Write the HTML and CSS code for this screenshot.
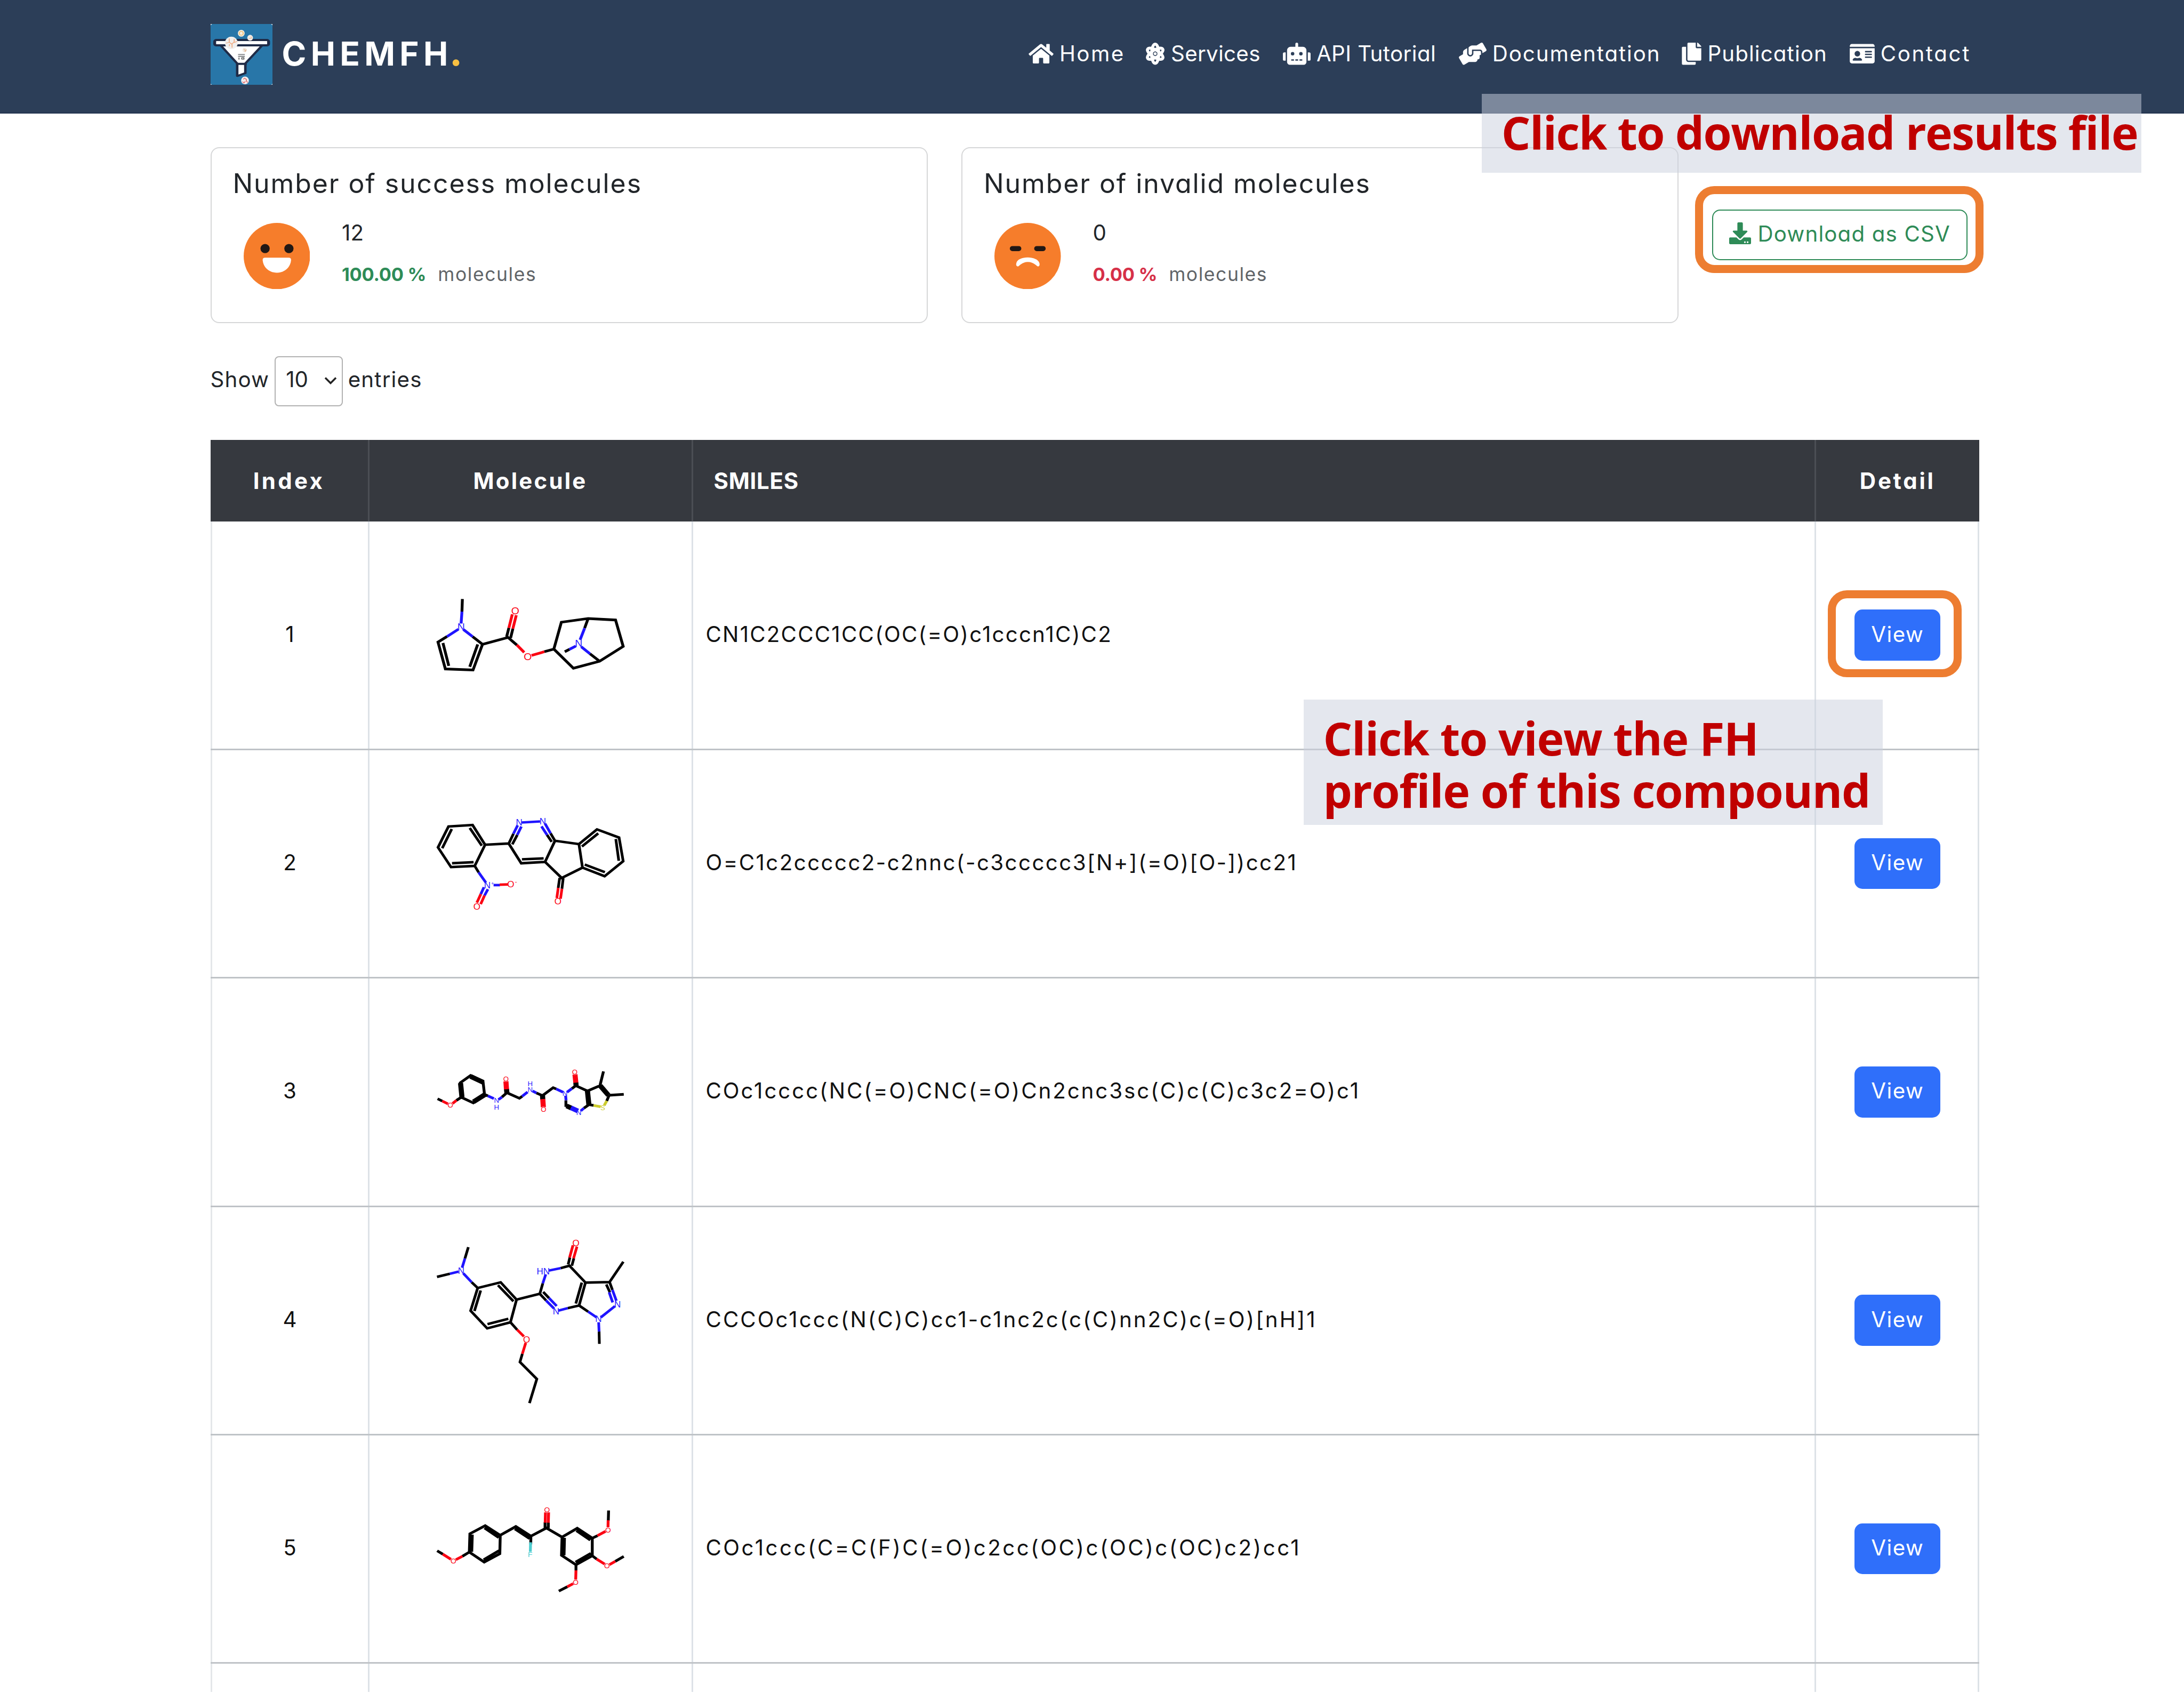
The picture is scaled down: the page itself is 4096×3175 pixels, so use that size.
FILE: index.html
```html
<!DOCTYPE html>
<html lang="en">
<head>
<meta charset="utf-8">
<title>ChemFH</title>
<link rel="stylesheet" href="styles.css">
</head>
<body>
<header class="header">
  <div class="brand">
    <svg class="logo" viewBox="66 95 349 461" preserveAspectRatio="none">
      <rect x="66" y="95" width="349" height="461" fill="#2876a8"/>
      <path d="M66 95h8l-8 10zM415 95h-8l8 10zM66 556h8l-8-10zM415 556h-8l8-10z" fill="#e8eef4"/>
      <path d="M122 255L216 393V488L262 466V393L358 255Z" fill="#fff" stroke="#1f2b47" stroke-width="14" stroke-linejoin="round"/>
      <path d="M210 396H270" stroke="#1f2b47" stroke-width="16"/>
      <rect x="89" y="216" width="304" height="40" rx="10" fill="#fff" stroke="#1f2b47" stroke-width="16"/>
      <ellipse cx="183" cy="238" rx="36" ry="47" fill="#f0efee"/>
      <path d="M171 205v28l14 14 14-16v-22M152 240l18-6M199 236l16-10M172 248v14M187 248v26" fill="none" stroke="#efaa80" stroke-width="5"/>
      <ellipse cx="239" cy="165" rx="19" ry="26" fill="#f5efe4"/>
      <ellipse cx="239" cy="165" rx="11" ry="15" fill="none" stroke="#f0c176" stroke-width="6"/>
      <ellipse cx="289" cy="199" rx="16" ry="22" fill="#f3ece6"/>
      <path d="M281 204h14v-14" fill="none" stroke="#e9b48d" stroke-width="4"/>
      <ellipse cx="258" cy="292" rx="12" ry="16" fill="#f3e9e0"/>
      <path d="M252 284l8 6v14l8-16" fill="none" stroke="#e6b994" stroke-width="4"/>
      <path d="M221 325h38M221 339h38" stroke="#55575c" stroke-width="6"/>
      <path d="M242 349h12v12h-12zM226 348v16" fill="none" stroke="#333" stroke-width="4"/>
      <ellipse cx="260" cy="521" rx="22" ry="29" fill="#f4eeee"/>
      <path d="M250 512l8-8 10 10v12l8 12M246 530l8 10 8-12" fill="none" stroke="#e06767" stroke-width="5"/>
    </svg>
    <span class="brand-name">CHEMFH<span class="dot">.</span></span>
  </div>
  <nav class="nav">
    <a class="home"><svg style="width:47px" viewBox="0 0 576 512"><path d="M280.37 148.26L96 300.11V464a16 16 0 0 0 16 16l112.06-.29a16 16 0 0 0 15.92-16V368a16 16 0 0 1 16-16h64a16 16 0 0 1 16 16v95.64a16 16 0 0 0 16 16.05L464 480a16 16 0 0 0 16-16V300L295.67 148.26a12.19 12.19 0 0 0-15.3 0zM571.6 251.47L488 182.56V44.05a12 12 0 0 0-12-12h-56a12 12 0 0 0-12 12v72.61L318.47 43a48 48 0 0 0-61 0L4.34 251.47a12 12 0 0 0-1.6 16.9l25.5 31A12 12 0 0 0 45.15 301l235.22-193.74a12.19 12.19 0 0 1 15.3 0L530.9 301a12 12 0 0 0 16.9-1.6l25.5-31a12 12 0 0 0-1.7-16.93z"/></svg>Home</a>
    <a class="services"><svg style="width:37px" viewBox="0 0 448 512"><g fill="none" stroke="#fff" stroke-width="68"><ellipse cx="224" cy="256" rx="84" ry="222"/><ellipse cx="224" cy="256" rx="84" ry="205" transform="rotate(58 224 256)"/><ellipse cx="224" cy="256" rx="84" ry="205" transform="rotate(-58 224 256)"/></g><circle cx="224" cy="256" r="34"/></svg>Services</a>
    <a class="api"><svg style="width:52px" viewBox="0 0 640 512"><path d="M32,224H64V416H32A31.96166,31.96166,0,0,1,0,384V256A31.96166,31.96166,0,0,1,32,224Zm512-48V448a64.06328,64.06328,0,0,1-64,64H160a64.06328,64.06328,0,0,1-64-64V176a79.974,79.974,0,0,1,80-80H288V32a32,32,0,0,1,64,0V96H464A79.974,79.974,0,0,1,544,176ZM264,256a40,40,0,1,0-40,40A39.997,39.997,0,0,0,264,256Zm-8,128H192v32h64Zm96,0H288v32h64ZM456,256a40,40,0,1,0-40,40A39.997,39.997,0,0,0,456,256Zm-8,128H384v32h64ZM640,256V384a31.96166,31.96166,0,0,1-32,32H576V224h32A31.96166,31.96166,0,0,1,640,256Z"/></svg>API Tutorial</a>
    <a class="docs"><svg style="width:52px" viewBox="0 0 640 512"><path d="M488 192H336v56c0 39.7-32.3 72-72 72s-72-32.3-72-72V126.4l-64.9 39C107.8 176.9 96 197.8 96 220.2v47.3l-80 46.2C.7 322.5-4.6 342.1 4.3 357.4l80 138.6c8.8 15.3 28.4 20.5 43.7 11.7L231.4 448H368c35.3 0 64-28.7 64-64h16c17.7 0 32-14.3 32-32v-64h8c13.3 0 24-10.7 24-24v-48c0-13.3-10.7-24-24-24zm147.7-37.4L555.7 16C546.9.7 527.3-4.5 512 4.3L408.6 64H306.4c-12 0-23.7 3.4-33.9 9.7L239 94.6c-9.4 5.8-15 16.1-15 27.1V248c0 22.1 17.9 40 40 40s40-17.9 40-40v-88h184c30.9 0 56 25.1 56 56v28.5l80-46.2c15.3-8.9 20.5-28.4 11.7-43.7z"/></svg>Documentation</a>
    <a class="pub"><svg style="width:37px" viewBox="0 0 448 512"><path d="M320 448v40c0 13.255-10.745 24-24 24H24c-13.255 0-24-10.745-24-24V120c0-13.255 10.745-24 24-24h72v296c0 30.879 25.121 56 56 56h168zm0-344V0H152c-13.255 0-24 10.745-24 24v368c0 13.255 10.745 24 24 24h272c13.255 0 24-10.745 24-24V128H344c-13.2 0-24-10.8-24-24zm120.971-31.029L375.029 7.029A24 24 0 0 0 358.059 0H352v96h96v-6.059a24 24 0 0 0-7.029-16.97z"/></svg>Publication</a>
    <a class="contact"><svg style="width:47px" viewBox="0 0 576 512"><path d="M528 32H48C21.5 32 0 53.5 0 80v16h576V80c0-26.5-21.5-48-48-48zM0 432c0 26.5 21.5 48 48 48h480c26.5 0 48-21.5 48-48V128H0v304zm352-232c0-4.4 3.6-8 8-8h144c4.4 0 8 3.6 8 8v16c0 4.4-3.6 8-8 8H360c-4.4 0-8-3.6-8-8v-16zm0 64c0-4.4 3.6-8 8-8h144c4.4 0 8 3.6 8 8v16c0 4.4-3.6 8-8 8H360c-4.4 0-8-3.6-8-8v-16zm0 64c0-4.4 3.6-8 8-8h144c4.4 0 8 3.6 8 8v16c0 4.4-3.6 8-8 8H360c-4.4 0-8-3.6-8-8v-16zM176 192c35.3 0 64 28.7 64 64s-28.7 64-64 64-64-28.7-64-64 28.7-64 64-64zM67.1 396.2C75.5 370.5 99.6 352 128 352h8.2c12.3 5.1 25.7 8 39.8 8s27.6-2.9 39.8-8h8.2c28.4 0 52.5 18.5 60.9 44.2 3.2 9.9-5.2 19.8-15.6 19.8H82.7c-10.4 0-18.8-10-15.6-19.8z"/></svg>Contact</a>
  </nav>
</header>

<main class="main">
  <section class="summary">
    <div class="card">
      <h5>Number of success molecules</h5>
      <div class="card-body">
        <svg class="face" viewBox="0 0 124 124"><circle cx="62" cy="62" r="62" fill="#f67d2b"/><circle cx="40" cy="48" r="8.6" fill="#211815"/><circle cx="84.5" cy="48" r="8.6" fill="#211815"/><path d="M40 65H84Q89 65 88.500 70C87 84 76 93 62 93S37 84 35.500 70Q35 65 40 65Z" fill="#fff"/></svg>
        <div class="figures">
          <div class="count">12</div>
          <div class="rate"><b class="ok">100.00 %</b><span class="unit">molecules</span></div>
        </div>
      </div>
    </div>
    <div class="card">
      <h5>Number of invalid molecules</h5>
      <div class="card-body">
        <svg class="face" viewBox="0 0 124 124"><circle cx="62" cy="62" r="62" fill="#f67d2b"/><path d="M33.500 48H45.500M79 48H91" stroke="#211815" stroke-width="9.5" stroke-linecap="round"/><path d="M44 81.500C41 81 40 79 41 75C44 61 80 61 84 75C85 79 84 81 81.500 81.500C79 81 73 73 62.500 73S46 81 44 81.500Z" fill="#fff"/></svg>
        <div class="figures">
          <div class="count">0</div>
          <div class="rate"><b class="bad">0.00 %</b><span class="unit">molecules</span></div>
        </div>
      </div>
    </div>
    <a class="download"><svg viewBox="0 0 512 512"><path d="M216 0h80c13.300 0 24 10.700 24 24v168h87.700c17.800 0 26.700 21.500 14.100 34.100L269.700 378.300c-7.500 7.500-19.800 7.500-27.300 0L90.100 226.100c-12.600-12.600-3.700-34.100 14.100-34.100H192V24c0-13.300 10.700-24 24-24zm296 376v112c0 13.300-10.700 24-24 24H24c-13.300 0-24-10.700-24-24V376c0-13.300 10.700-24 24-24h146.700l49 49c20.100 20.100 52.500 20.100 72.600 0l49-49H488c13.300 0 24 10.700 24 24zm-124 88c0-11-9-20-20-20s-20 9-20 20 9 20 20 20 20-9 20-20zm64 0c0-11-9-20-20-20s-20 9-20 20 9 20 20 20 20-9 20-20z"/></svg><span>Download as CSV</span></a>
  </section>

  <div class="length">
    <span>Show</span>
    <span class="select"><span>10</span><svg viewBox="0 0 24 14"><path d="M2 1.500L12 11.500L22 1.500" fill="none" stroke="#222" stroke-width="3.5"/></svg></span>
    <span>entries</span>
  </div>

  <div class="table">
    <div class="row head"><div class="c th-index">Index</div><div class="c th-molecule">Molecule</div><div class="th-smiles">SMILES</div><div class="c th-detail">Detail</div></div>

    <div class="row"><div class="c">1</div><div class="c pic">
      <svg class="mol m1" style="height:223.4px" viewBox="-11.5 1 1568 900" preserveAspectRatio="none">
        <path class="k" d="M290 180L287 275M182 463L118 505L170 708L365 716L432 522L362 464M153 512L194 685M398 523L342 692M432 522L612 470L674 527M602 465L618 398M630 474L646 404M868 578L935 558L988 355L1177 327L1370 338L1424 538L1258 650L1073 703L935 558M1177 327L1152 400M1258 650L1190 594M1012 578L1045 560"/>
        <path class="b" d="M287 275L281 365M262 408L182 463M297 410L362 464M1152 400L1120 488M1090 535L1045 560M1128 540L1190 594"/>
        <path class="r" d="M618 398L642 295M646 404L670 302M674 527L726 583M778 606L868 578"/>
        <g font-size="73"><text class="tb" x="281" y="418">N</text><text class="tr" x="663" y="297">O</text><text class="tr" x="751" y="640">O</text><text class="tb" x="1110" y="541">N</text></g>
      </svg></div><div class="smi s1">CN1C2CCC1CC(OC(=O)c1cccn1C)C2</div><div class="c pic"><a class="view">View</a></div></div>

    <div class="row"><div class="c">2</div><div class="c pic">
      <svg class="mol m2" style="height:223.4px" viewBox="-11.5 17 1568 900" preserveAspectRatio="none">
        <path class="k" d="M450 324L362 175L192 186L118 344L210 493L377 484L450 324L617 315M427 331L342 197M215 205L148 350M217 464L369 456M617 315L650 241M642 321L677 250M617 315L705 464L873 454L943 294L912 238M710 434L863 427M920 302L887 250M943 294L1112 319L1137 497L990 575L873 454M1112 319L1239 208L1395 270L1424 448L1293 562L1137 497M1133 337L1248 238M1372 281L1393 445M1153 474L1295 531M377 484L405 533M976 575L966 650M1001 577L992 657"/>
        <path class="b" d="M650 241L680 177M677 250L706 186M708 156L838 148M912 238L873 165M887 250L848 185M405 533L456 610M442 645L420 697M470 660L446 708M510 629H555"/>
        <path class="r" d="M553 626L612 624M420 697L392 762M446 708L419 773M966 650L956 726M992 657L982 732"/>
        <g font-size="64"><text class="tb" x="690" y="178">N</text><text class="tb" x="857" y="169">N</text><text class="tb" x="466" y="652">N</text><text class="tb" font-size="36" x="503" y="628">+</text><text class="tr" x="631" y="645">O</text><text class="tr" font-size="44" x="668" y="618">-</text><text class="tr" x="392" y="813">O</text><text class="tr" x="964" y="775">O</text></g>
      </svg></div><div class="smi s2">O=C1c2ccccc2-c2nnc(-c3ccccc3[N+](=O)[O-])cc21</div><div class="c pic"><a class="view">View</a></div></div>

    <div class="row"><div class="c">3</div><div class="c pic">
      <svg class="mol m3" style="height:134px" viewBox="-11.5 3 1568 540" preserveAspectRatio="none">
        <path class="k" d="M115 324L148 341M248 336L282 312L275 203L348 148L435 190L446 290L367 355L282 312M446 290L470 302M569 311L604 278L692 320L712 305M812 280L855 300L930 240L952 250M1062 247L1090 225L1172 265L1260 225L1285 117M1325 297L1428 290M1172 265L1183 368L1147 395M1183 368L1215 374M1325 297L1308 340M1020 335V385"/>
        <path class="k w" d="M277 205L287 312M348 155L437 200M452 290L368 347M604 280L601 250M855 297L857 328M1092 225L1090 200M1172 265L1182 368M1262 225L1320 297M1025 378L1060 395"/>
        <path class="b" d="M470 302L512 322M545 330L569 311M712 305L750 272M785 265L812 280M952 250L1000 274M1028 274L1062 247M1018 300L1021 335M1125 415L1147 395"/>
        <path class="b w" d="M1055 392L1105 416"/>
        <path class="r" d="M148 341L192 364M220 360L248 336"/>
        <path class="r w" d="M601 252L597 192M857 326L861 388M1090 202L1084 140"/>
        <path class="y" d="M1215 374L1265 384M1290 374L1308 340"/>
        <g font-size="50"><text class="tr h" x="205" y="391">O</text><text class="tr h" x="597" y="192">O</text><text class="tr h" x="862" y="422">O</text><text class="tr h" x="1082" y="140">O</text><text class="tb" x="531" y="353">N</text><text class="tb" x="531" y="405">H</text><text class="tb" x="768" y="272">N</text><text class="tb" x="768" y="228">H</text><text class="tb" x="1013" y="302">N</text><text class="tb" x="1111" y="446">N</text><text class="ty" x="1280" y="409">S</text></g>
      </svg></div><div class="smi s3">COc1cccc(NC(=O)CNC(=O)Cn2cnc3sc(C)c(C)c3c2=O)c1</div><div class="c pic"><a class="view">View</a></div></div>

    <div class="row"><div class="c">4</div><div class="c pic">
      <svg class="mol m4" style="height:342.6px" viewBox="-11.5 -12 1568 1380" preserveAspectRatio="none">
        <path class="k" d="M332 124L308 210M111 349L202 325M355 389L398 433L560 390L672 521L629 692L465 738L348 605L398 433M419 452L375 607M541 412L650 533M467 706L614 666M629 692L676 748M672 521L836 477L857 398M836 477L880 527M860 463L901 509M983 283L1045 265L1158 392L1113 565L1033 585M1132 392L1090 550M1036 255L1048 203M1062 265L1076 209M1158 392L1328 388L1348 447M1305 406L1330 465M1328 388L1425 235M1113 565L1177 612M1254 762L1256 855M713 930L696 992L815 1120L763 1303"/>
        <path class="b" d="M308 210L288 280M202 325L263 309M297 323L355 389M857 398L878 330M900 301L983 283M880 527L936 588M901 509L955 569M966 604L1033 585M1177 612L1237 655M1348 447L1376 530M1325 465L1350 542M1366 570L1266 655M1251 692L1254 762"/>
        <path class="r" d="M1046 203L1070 110M1074 209L1098 120M676 748L724 799M737 847L713 930"/>
        <g font-size="64"><text class="tb" x="281" y="326">N</text><text class="tb" x="860" y="331">HN</text><text class="tb" x="951" y="631">N</text><text class="tb" x="1384" y="579">N</text><text class="tb" x="1250" y="688">N</text><text class="tr" x="1091" y="116">O</text><text class="tr" x="743" y="846">O</text></g>
      </svg></div><div class="smi s4">CCCOc1ccc(N(C)C)cc1-c1nc2c(c(C)nn2C)c(=O)[nH]1</div><div class="c pic"><a class="view">View</a></div></div>

    <div class="row"><div class="c">5</div><div class="c pic">
      <svg class="mol m5" style="height:208.5px" viewBox="-11.5 4 1568 840" preserveAspectRatio="none">
        <path class="k" d="M112 440L152 466M290 482L339 450L343 312L451 250L557 323L554 462L444 526L339 450M360 318L356 448M446 268L546 340M548 440L440 508M557 323L667 257L773 330L883 268L993 337L989 474L1091 546L1206 478L1206 345L1100 270L993 337M660 275L764 348M773 330L772 392M873 268V225M896 268V225M1010 342L1007 474M1094 288L1192 360M1196 460L1088 526M1206 345L1243 326M1321 136L1319 212M1206 478L1237 503M1368 520L1428 483M1091 546V588M970 745L1030 712"/>
        <path class="f" d="M771 376L769 448"/>
        <path class="r" d="M152 466L210 505M243 508L290 482M874 228L876 150M896 228L898 150M1243 326L1300 293M1318 210L1317 262M1237 503L1295 542M1325 546L1368 520M1091 588L1089 658M1030 712L1075 686"/>
        <g font-size="52"><text class="tr h" x="227" y="537">O</text><text class="tr h" x="887" y="150">O</text><text class="tr h" x="1317" y="302">O</text><text class="tr h" x="1310" y="571">O</text><text class="tr h" x="1089" y="697">O</text><text class="tf" x="768" y="487">F</text></g>
      </svg></div><div class="smi s5">COc1ccc(C=C(F)C(=O)c2cc(OC)c(OC)c(OC)c2)cc1</div><div class="c pic"><a class="view">View</a></div></div>
    <div class="row cut"><div></div><div></div><div></div><div></div></div>
  </div>
</main>

<div class="highlight hl-download"></div>
<div class="highlight hl-view"></div>
<div class="note note-download">Click to download results file</div>
<div class="note note-view">Click to view the FH<br>profile of this compound</div>
</body>
</html>
```
FILE: styles.css
```css
* { box-sizing: border-box; }
body {
  margin: 0;
  width: 4096px;
  height: 3175px;
  overflow: hidden;
  position: relative;
  background: #fff;
  color: #212529;
  font-family: Inter, "Open Sans", sans-serif;
  font-feature-settings: "cv11", "calt" 0;
  font-size: 40.3px;
  line-height: 60px;
}
.header {
  height: 213px;
  padding: 0 0 10px 394.5px;
  display: flex;
  align-items: center;
  background: #2c3e58;
  border-bottom: 2px solid #22344f;
  color: #fff;
}
.brand { width: 1534.4px; display: flex; align-items: center; }
.logo { width: 116px; height: 114.5px; margin: 3px 18px 0 0; }
.brand-name { font-size: 62px; font-weight: 700; letter-spacing: 8.3px; }
.dot { color: #f9c042; font-size: 74px; margin-left: -6px; line-height: 0; }
.nav {
  display: grid;
  grid-template-columns: 219.1px 257.9px 329.9px 418.7px 314.2px auto;
}
.nav a { display: flex; align-items: center; gap: 11px; white-space: nowrap; }
.nav svg { height: 41.5px; fill: #fff; flex: none; overflow: visible; }
.home { letter-spacing: 2.5px; }
.services { letter-spacing: 0.3px; }
.api { letter-spacing: 0.4px; }
.docs { letter-spacing: 1.9px; }
.pub { letter-spacing: 1.1px; }
.contact { letter-spacing: 2.6px; }

.main { padding: 62.5px 384px 0 394.5px; }
.summary { display: flex; }
.card {
  width: 1345px;
  height: 330px;
  margin-right: 63.5px;
  padding: 36px 0 0 40px;
  border: 2.5px solid #d6d7d8;
  border-radius: 16px;
}
.card h5 { margin: 0; font-size: 50px; font-weight: 400; line-height: 60px; letter-spacing: 1.9px; }
.card-body { display: flex; }
.face { width: 124.5px; height: 124.5px; margin: 44px 60px 0 20px; }
.figures { padding-top: 33px; }
.rate { margin-top: 18px; font-size: 35.5px; display: flex; gap: 22px; }
.rate b { font-size: 34.5px; letter-spacing: -0.3px; }
.ok { color: #2e8b57; }
.bad { color: #d63048; }
.unit { color: #606468; letter-spacing: 1.55px; }
.download {
  width: 479px;
  height: 95.5px;
  margin: 117px 0 0 -1px;
  padding: 0 0 3px 30px;
  display: flex;
  align-items: center;
  gap: 13px;
  border: 2.5px solid #2e8b57;
  border-radius: 15px;
  color: #2e8b57;
  letter-spacing: 1.15px;
}
.download svg { width: 41px; height: 41px; margin-bottom: 2px; fill: #2e8b57; }

.length { height: 94.5px; margin-top: 62px; display: flex; align-items: center; gap: 10px; letter-spacing: 1.15px; }
.length > span { padding-bottom: 5px; }
.length .select {
  width: 127.5px;
  height: 94.5px;
  padding: 0 9px 5px 19px;
  display: flex;
  align-items: center;
  justify-content: space-between;
  border: 2.5px solid #b2b2b2;
  border-radius: 8px;
  letter-spacing: 0;
}
.select svg { width: 24px; height: 14px; margin-top: 4px; }

.table { margin-top: 63px; width: 3317px; }
.row {
  display: grid;
  grid-template-columns: 298px 607px 2106.500px 305.500px;
  height: 428.4px;
  border-bottom: 3.5px solid #bfc3c7;
  color: #111;
}
.row > div { display: flex; align-items: center; padding-bottom: 3px; border-right: 3px solid #dde2e7; }
.row > .pic { padding-bottom: 0; }
.row > div:first-child { border-left: 3px solid #e4e7ea; }
.row .c { justify-content: center; }
.row.head { height: 153.4px; background: #36393f; border: 0; color: #fff; font-weight: 700; font-size: 42px; }
.row.head > div { border-color: #4b4e54; padding-bottom: 0; }
.row.head > div:last-child, .row.head > div:first-child { border-left: 0; }
.row.head > div:last-child { border-right: 0; }
.row.cut { height: 53px; border: 0; }
.th-index { letter-spacing: 4.3px; }
.th-molecule { letter-spacing: 3.2px; }
.row .th-smiles { padding-left: 39px; letter-spacing: 0.7px; }
.th-detail { letter-spacing: 3.7px; }
.smi { padding-left: 24px; }
.s1 { letter-spacing: 2.17px; }
.s2 { letter-spacing: 2.39px; }
.s3 { letter-spacing: 2.9px; }
.s4 { letter-spacing: 3px; }
.s5 { letter-spacing: 3.43px; }
.view {
  width: 161.4px;
  height: 95.7px;
  margin-left: 3px;
  padding-bottom: 3px;
  display: flex;
  align-items: center;
  justify-content: center;
  border-radius: 15px;
  background: #2f6ffa;
  color: #fff;
  letter-spacing: 1.4px;
}
.mol { width: 417px; margin-left: 2px; overflow: visible; letter-spacing: 0; font-family: "Liberation Sans", sans-serif; }
.mol path { fill: none; stroke-width: 20; stroke-linejoin: miter; }
.mol.m2 path, .mol.m4 path { stroke-width: 19; }
.mol path.k { stroke: #000; }
.mol path.b { stroke: #1f14ff; }
.mol path.r { stroke: #fb0012; }
.mol path.y { stroke: #cbcb2c; }
.mol path.f { stroke: #4fcdd0; }
.mol path.w { stroke-width: 36; }
.mol text { text-anchor: middle; }
.tb { fill: #2a20ff; }
.tr { fill: #fb0012; }
.ty { fill: #cbcb2c; }
.tf { fill: #4fcdd0; }
.h { paint-order: stroke; stroke: #fff; stroke-width: 4; }

.highlight { position: absolute; border: 15.5px solid #ed7d31; border-radius: 36px; }
.hl-download { left: 3179.4px; top: 348.6px; width: 540.2px; height: 163.6px; }
.hl-view { left: 3428.4px; top: 1106.7px; width: 250.8px; height: 163.6px; }
.note {
  position: absolute;
  padding: 23px 0 0 37px;
  background: rgba(202, 208, 221, 0.51);
  color: #c00000;
  font: 700 86px/98.2px "Open Sans", "Noto Sans", sans-serif;
  white-space: nowrap;
}
.note-download { left: 2778.8px; top: 176.4px; width: 1237.6px; height: 148px; letter-spacing: -1.57px; }
.note-view { left: 2444.5px; top: 1312.2px; width: 1086.8px; height: 235px; letter-spacing: -1.3px; }
```
